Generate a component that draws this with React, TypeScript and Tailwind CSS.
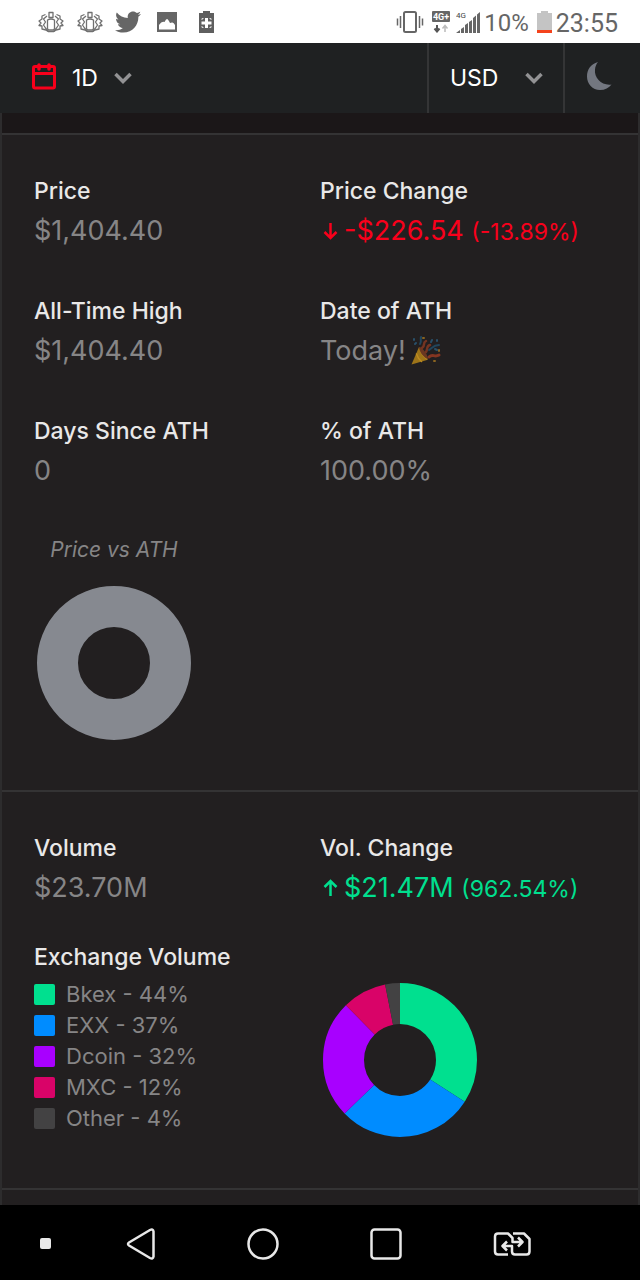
import React, { useState } from 'react';
import { FaTwitter } from 'react-icons/fa';

const exchanges = [
  { name: 'Bkex', share: 44, color: '#00e08f' },
  { name: 'EXX', share: 37, color: '#008cff' },
  { name: 'Dcoin', share: 32, color: '#a800ff' },
  { name: 'MXC', share: 12, color: '#d90368' },
  { name: 'Other', share: 4, color: '#434243' },
];

const BugIcon = () => (
  <svg viewBox="0 0 26 22" className="w-[26px] h-[22px]" fill="none" stroke="#707070" strokeWidth="1.3" strokeLinejoin="round">
    <path d="M11 1.500h4v5h-4z" />
    <path d="M9.500 9q3.500-2 7 0v8q0 2-1.500 2h-4q-1.500 0-1.500-2z" />
    <path d="M9 5 5.500 8l2 3-2 3 2 3 3 3.500M17 5l3.500 3-2 3 2 3-2 3-3 3.500" />
    <path d="M7.500 3.500 4 5v3l-3 2 2 2-2 2.500 3 .5v3l4 1 2 1.500M18.500 3.500 22 5v3l3 2-2 2 2 2.500-3 .5v3l-4 1-2 1.500M10 20.500h6" />
  </svg>
);

const PictureIcon = () => (
  <svg viewBox="0 0 20 20" className="w-5 h-5" fill="#666">
    <path fillRule="evenodd" d="M0 0h20v20H0zM2 17.500h16V13q-1.500-3-3-2.500l-2 .5q-2-4-3-4t-2.500 3Q5 8.500 2 13z" />
  </svg>
);

const BatteryPlusIcon = () => (
  <svg viewBox="0 0 15 22" className="w-[15px] h-[22px]">
    <path d="M4 0h7v2h4v20H0V2h4z" fill="#5f5f5f" />
    <path d="M6 7h3v3.500h3.500v3H9V17H6v-3.500H2.500v-3H6z" fill="#fff" />
    <path d="M3 9V7.500h1.500M10.500 7.500H12V9M3 15v1.500h1.500M10.500 16.500H12V15" fill="none" stroke="#ddd" />
  </svg>
);

const VibrateIcon = () => (
  <svg viewBox="0 0 28 22" className="w-7 h-[22px]" fill="none" stroke="#666">
    <rect x="8" y="1" width="12" height="20" rx="1.500" strokeWidth="2" />
    <path d="M4.500 5v12M23.500 5v12M1.500 7.500v7M26.500 7.500v7" strokeWidth="1.500" />
  </svg>
);

const DataIcon = () => (
  <svg viewBox="0 0 18 22" className="w-[18px] h-[22px]">
    <rect width="18" height="11" rx="1" fill="#666" />
    <text x="9" y="9" textAnchor="middle" fontSize="9" fontWeight="700" fontFamily="Roboto, sans-serif" fill="#fff">4G+</text>
    <path d="M5 14v6M2.500 17.500 5 20.500l2.500-3" fill="none" stroke="#555" strokeWidth="2" />
    <path d="M13 21v-6M10.500 17.500 13 14.500l2.500 3" fill="none" stroke="#bbb" strokeWidth="1.500" />
  </svg>
);

const SignalIcon = () => (
  <svg viewBox="0 0 24 22" className="w-6 h-[22px]" fill="#666">
    <text x="0" y="7" fontSize="8" fontFamily="Roboto, sans-serif" fill="#444">4G</text>
    <path d="M0 22l4-3v3zM5 22v-4l3-2v6zM9 22v-8l3-2v10zM13 22V11l3-2v13zM17 22V7l3-2.500V22zM21 22V3.500L24 1v21z" />
  </svg>
);

const BatteryIcon = () => (
  <svg viewBox="0 0 15 22" className="w-[15px] h-[22px]">
    <path d="M4 0h7v2h4v20H0V2h4z" fill="#c4c4c4" />
    <path d="M0 19h15v3H0z" fill="#f4431c" />
  </svg>
);

const CalendarIcon = () => (
  <svg viewBox="0 0 24 27" className="mb-1 w-6 h-[27px]" fill="none" stroke="#f9001b" strokeWidth="3">
    <rect x="1.500" y="3.500" width="21" height="21.500" rx="1.500" />
    <path d="M1.500 10.500h21" />
    <path d="M7 2v4M17 2v4" strokeWidth="3.500" strokeLinecap="round" />
  </svg>
);

const ChevronIcon = () => (
  <svg
    viewBox="0 0 18 12"
    className="pointer-events-none absolute right-0 top-1/2 -translate-y-1/2 w-[18px] h-3"
    fill="none"
    stroke="#929294"
    strokeWidth="3.500"
  >
    <path d="m1.500 2 7.500 7.500L16.500 2" />
  </svg>
);

const MoonIcon = () => (
  <svg viewBox="0 0 26 30" className="w-[26px] h-[30px]" fill="#737780">
    <path d="M12 1C4.500 3 1 9 1 15.500 1 23 6.500 29 14 29c5 0 9-2 11.500-5.500C16 25 8 17 9 8.500 9.300 5.500 10.300 3 12 1z" />
  </svg>
);

const PartyIcon = () => (
  <svg viewBox="0 0 32 32" className="w-8 h-8" fill="none" strokeLinecap="round" role="img" aria-label="party popper">
    <path d="M9 12 1.500 29.500 17 25c1-3-4-11-8-13z" fill="#9d7419" />
    <path d="M6.500 19c1 3 3 6 5 7.500M10 14c0 3 4 8 7 10" stroke="#bd8b20" strokeWidth="1.500" />
    <path d="M9 12c3 0 8 6 9 12-4-1-9-7-9-12z" fill="#6a3721" />
    <path d="M12 13c4-3 0-5 4-7M16 17c2-3 0-6 4-7" stroke="#743421" strokeWidth="2.500" />
    <path d="M19 22c4-4 5 1 10-2" stroke="#843521" strokeWidth="3" />
    <path d="M10 9c2-3 0-5 1-7M19 15c4-3 5-5 10-5" stroke="#21465c" strokeWidth="2" />
    <path d="M4 4v1M22 5l-1 2M27 5v1M25 14l2 1M5 9l1-1" stroke="#29506a" strokeWidth="2" />
    <path d="M13 3h1M29 15v1M24 26h1" stroke="#8a6420" strokeWidth="2" />
  </svg>
);

const ArrowIcon = ({ up }: { up?: boolean }) => (
  <svg viewBox="0 0 20 20" className="w-5 h-5 shrink-0" fill="none" stroke="currentColor" strokeWidth="2.500">
    {up ? <path d="M10.500 18V3M4.500 9l6-6 6 6" /> : <path d="M10.500 2v15M4.500 11l6 6 6-6" />}
  </svg>
);

const Donut = ({ slices, label }: { slices: { share: number; color: string }[]; label: string }) => {
  const total = slices.reduce((sum, s) => sum + s.share, 0);
  let start = 0;

  return (
    <svg viewBox="0 0 160 160" className="w-40 h-40" role="img" aria-label={label}>
      <g transform="rotate(-90 80 80)" fill="none" strokeWidth="41">
        {slices.map((s, idx) => {
          const offset = start;
          start += s.share;
          return (
            <circle
              key={idx}
              cx="80"
              cy="80"
              r="56.5"
              stroke={s.color}
              pathLength={total}
              strokeDasharray={slices.length > 1 ? `${s.share} ${total - s.share}` : undefined}
              strokeDashoffset={-offset}
            />
          );
        })}
      </g>
    </svg>
  );
};

const Stat = ({ label, children }: { label: string; children: React.ReactNode }) => (
  <div>
    <dt className="text-[23px] leading-8 font-medium text-[#e9e8e8]">{label}</dt>
    <dd className="flex items-center mt-1 h-10 text-[27px] text-[#868586] whitespace-nowrap">{children}</dd>
  </div>
);

const Change = ({ amount, percent, up }: { amount: string; percent: string; up?: boolean }) => (
  <span className={up ? 'flex items-center gap-1 text-[#00df8e]' : 'flex items-center gap-1 text-[#f9001b]'}>
    <ArrowIcon up={up} />
    <span>
      {amount} <span className="text-[23px]">({percent})</span>
    </span>
  </span>
);

const StatusBar = () => (
  <div className="flex items-center justify-between h-[43px] pl-[38px] pr-[22px] bg-white text-[#666] font-[Roboto,sans-serif]">
    <div className="flex items-center">
      <BugIcon />
      <span className="ml-[13px]"><BugIcon /></span>
      <FaTwitter className="ml-3 w-[26px] h-[26px] text-[#666]" />
      <span className="ml-4"><PictureIcon /></span>
      <span className="ml-[22px]"><BatteryPlusIcon /></span>
    </div>
    <div className="flex items-center">
      <VibrateIcon />
      <span className="ml-2"><DataIcon /></span>
      <span className="ml-1.5"><SignalIcon /></span>
      <span className="ml-1 pt-0.5 text-2xl">10%</span>
      <span className="ml-2"><BatteryIcon /></span>
      <span className="ml-1 pt-1 text-[25px] leading-8">23:55</span>
    </div>
  </div>
);

const Header = () => {
  const [range, setRange] = useState('1D');
  const [currency, setCurrency] = useState('USD');

  return (
    <header className="flex h-[70px] bg-[#1f2122] text-[23px] text-white">
      <label className="flex flex-1 items-center gap-4 pl-8">
        <CalendarIcon />
        <span className="relative">
          <select
            aria-label="Time range"
            value={range}
            onChange={(e) => setRange(e.target.value)}
            className="appearance-none w-[60px] outline-none"
          >
            <option>1D</option>
            <option>7D</option>
            <option>1M</option>
          </select>
          <ChevronIcon />
        </span>
      </label>
      <div className="flex items-center border-l-2 border-[#343536] pl-[21px] pr-5">
        <span className="relative">
          <select
            aria-label="Currency"
            value={currency}
            onChange={(e) => setCurrency(e.target.value)}
            className="appearance-none w-[93px] outline-none"
          >
            <option>USD</option>
            <option>EUR</option>
            <option>BTC</option>
          </select>
          <ChevronIcon />
        </span>
      </div>
      <button aria-label="Toggle dark mode" className="flex items-center justify-center w-[77px] pr-2 pb-1 border-l-2 border-[#343536]">
        <MoonIcon />
      </button>
    </header>
  );
};

const NavBar = () => (
  <nav className="flex items-center h-[75px] pl-[39px] pr-[109px] pt-0.5 bg-black">
    <button aria-label="Dock" className="flex justify-center w-3">
      <span className="w-[11px] h-[11px] rounded-xs bg-[#e8e8e8]" />
    </button>
    <div className="flex flex-1 items-center justify-between ml-[75px]">
      <button aria-label="Back">
        <svg viewBox="0 0 30 34" className="w-[30px] h-[34px]" fill="none" stroke="#e8e8e8" strokeWidth="2.500" strokeLinejoin="round">
          <path d="M3 15.500 24 3q3-1.500 3.500 1.500v25Q27 32.500 24 31L3 18.500Q1 17 3 15.500z" />
        </svg>
      </button>
      <button aria-label="Home">
        <svg viewBox="0 0 32 32" className="w-8 h-8" fill="none" stroke="#e8e8e8" strokeWidth="2.500">
          <circle cx="16" cy="16" r="14.500" />
        </svg>
      </button>
      <button aria-label="Recent apps">
        <svg viewBox="0 0 32 32" className="w-8 h-8" fill="none" stroke="#e8e8e8" strokeWidth="2.500">
          <rect x="1.500" y="1.500" width="29" height="29" rx="3" />
        </svg>
      </button>
      <button aria-label="Switch SIM">
        <svg viewBox="0 0 38 26" className="w-[38px] h-[26px]" fill="none" stroke="#e8e8e8" strokeWidth="2.500" strokeLinejoin="round">
          <path d="M15 23.500H5q-3 0-3-3v-15q0-3 3-3h10l4.500 4.500v4H29M25 6.500l4.500 4.500-4.500 4.500" />
          <path d="M20 2.500h11L36.500 8v12.500q0 3-3 3H22q-3 0-3-3V15H10M14 10.500 9.500 15l4.500 4.500" />
        </svg>
      </button>
    </div>
  </nav>
);

export default function App() {
  return (
    <div className="flex flex-col min-h-screen bg-[#221f20] font-[Inter,sans-serif]">
      <StatusBar />
      <Header />

      <main className="flex-1 flex flex-col border-x-2 border-[#2d2c2d]">
        <div className="h-5 bg-[#1b1718]" />

        <section className="border-t-2 border-[#343334] px-8 pt-10 pb-[47px]">
          <dl className="grid grid-cols-2 gap-y-11">
            <Stat label="Price">$1,404.40</Stat>
            <Stat label="Price Change">
              <Change amount="-$226.54" percent="-13.89%" />
            </Stat>
            <Stat label="All-Time High">$1,404.40</Stat>
            <Stat label="Date of ATH">
              <span className="mr-1">Today!</span>
              <PartyIcon />
            </Stat>
            <Stat label="Days Since ATH">0</Stat>
            <Stat label="% of ATH">100.00%</Stat>
          </dl>
          <figure className="mt-[43px] w-40">
            <figcaption className="mb-[17px] text-[21px] leading-8 italic text-center text-[#868586]">Price vs ATH</figcaption>
            <Donut slices={[{ share: 100, color: '#868990' }]} label="Price vs ATH" />
          </figure>
        </section>

        <section className="border-t-2 border-[#343334] px-8 pt-10 pb-12">
          <dl className="grid grid-cols-2">
            <Stat label="Volume">$23.70M</Stat>
            <Stat label="Vol. Change">
              <Change up amount="$21.47M" percent="962.54%" />
            </Stat>
          </dl>
          <div className="grid grid-cols-2 items-end mt-[33px]">
            <div className="pb-1.5">
              <h2 className="mb-1.5 text-[23px] leading-8 font-medium text-[#e9e8e8]">Exchange Volume</h2>
              <ul>
                {exchanges.map((item) => (
                  <li key={item.name} className="flex items-center gap-[11px] h-[31px] text-[22px] text-[#868586]">
                    <span className="w-[21px] h-[21px] rounded-xs" style={{ backgroundColor: item.color }} />
                    {item.name} - {item.share}%
                  </li>
                ))}
              </ul>
            </div>
            <Donut slices={exchanges} label="Exchange volume" />
          </div>
        </section>

        <div className="flex-1 min-h-3.5 border-t-2 border-[#343334]" />
      </main>

      <NavBar />
    </div>
  );
}
